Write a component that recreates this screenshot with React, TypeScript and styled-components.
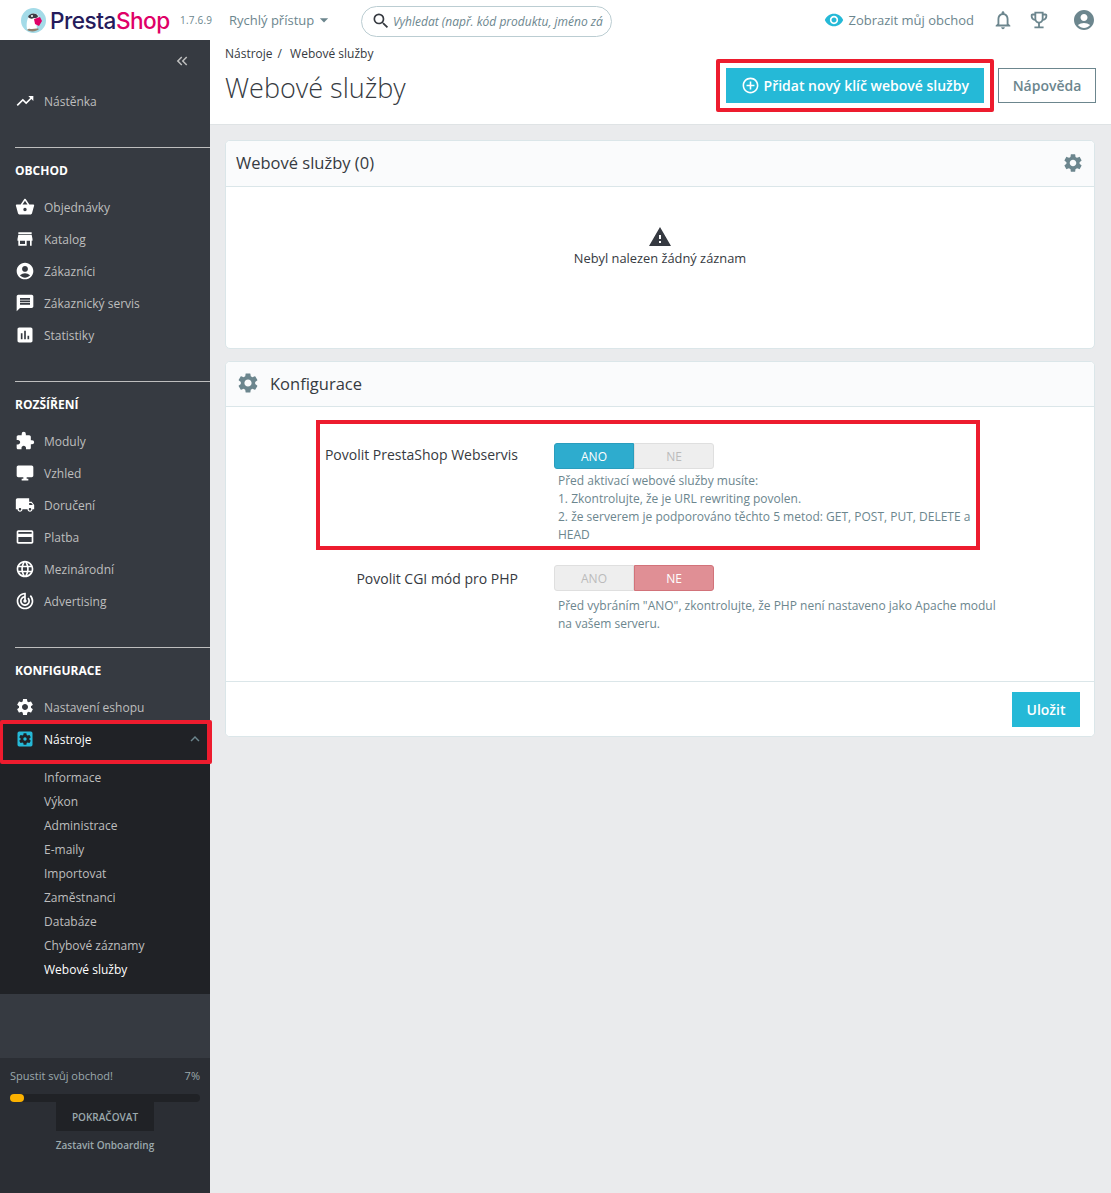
import React from 'react';
import styled, { createGlobalStyle } from 'styled-components';
import {
  MdAccountCircle,
  MdAddCircleOutline,
  MdAssessment,
  MdArrowDropDown,
  MdCreditCard,
  MdDesktopWindows,
  MdExtension,
  MdKeyboardArrowUp,
  MdKeyboardDoubleArrowLeft,
  MdLanguage,
  MdLocalShipping,
  MdMessage,
  MdNotificationsNone,
  MdOutlineEmojiEvents,
  MdSearch,
  MdSettings,
  MdSettingsApplications,
  MdShoppingBasket,
  MdStore,
  MdTrackChanges,
  MdTrendingUp,
  MdVisibility,
  MdWarning,
} from 'react-icons/md';

const GlobalStyle = createGlobalStyle`
  html, body { margin: 0; padding: 0; background: #eaebed; }
  * { box-sizing: border-box; }
  body { font-family: "Open Sans", "Liberation Sans", sans-serif; color: #363a41; }
`;

const Page = styled.div`
  width: 1111px;
  height: 1193px;
  display: flex;
  flex-direction: column;
  overflow: hidden;
`;

const TopBar = styled.header`
  height: 40px;
  flex: none;
  background: #fff;
  display: flex;
  align-items: center;
  padding-left: 21px;
`;

const LogoMark = styled.svg`
  width: 25px;
  height: 25px;
  flex: none;
`;

const LogoText = styled.div`
  margin-left: 4px;
  width: 121px;
  font-family: Inter, "Noto Sans", sans-serif;
  font-size: 22.6px;
  font-weight: 500;
  letter-spacing: -0.5px;
  color: #251b5b;
  span { color: #df0067; }
`;

const Version = styled.span`
  margin-left: 9px;
  width: 38px;
  font-size: 10px;
  color: #6c868e;
  letter-spacing: 0.2px;
`;

const QuickAccess = styled.div`
  margin-left: 11px;
  width: 132px;
  display: flex;
  align-items: center;
  font-size: 13px;
  color: #6c868e;
`;

const SearchBox = styled.div`
  width: 251px;
  height: 31px;
  margin-top: 2px;
  border: 1px solid #bbcdd2;
  border-radius: 16px;
  display: flex;
  align-items: center;
  padding: 0 8px 0 9px;
  color: #363a41;
`;

const SearchInput = styled.input`
  flex: 1;
  min-width: 0;
  margin-left: 2px;
  border: 0;
  outline: 0;
  padding: 0;
  background: transparent;
  font: italic 12px "Open Sans", sans-serif;
  &::placeholder { color: #6c868e; opacity: 1; }
`;

const TopRight = styled.div`
  margin-left: auto;
  display: flex;
  align-items: center;
  padding-right: 15px;
`;

const ShopLink = styled.div`
  display: flex;
  align-items: center;
  gap: 4px;
  font-size: 13px;
  color: #6c868e;
  margin-right: 18px;
  svg { color: #25b9d7; }
`;

const TopIcon = styled.span<{ $gap?: number }>`
  display: flex;
  color: #6c868e;
  margin-left: ${(p) => p.$gap ?? 0}px;
`;

const Body = styled.div`
  flex: 1;
  min-height: 0;
  display: flex;
`;

const Sidebar = styled.nav`
  width: 210px;
  flex: none;
  background: #363a41;
  display: flex;
  flex-direction: column;
`;

const Collapse = styled.div`
  height: 44px;
  display: flex;
  justify-content: flex-end;
  align-items: center;
  padding: 0 19px 2px 0;
  color: #bebebe;
`;

const MenuItem = styled.div`
  height: 32px;
  display: flex;
  align-items: center;
  padding-left: 15px;
  font-size: 12px;
  color: #bebebe;
  svg { flex: none; color: #fff; margin-right: 9px; }
`;

const Divider = styled.div`
  height: 1px;
  margin-left: 15px;
  background: #bebebe;
`;

const SectionTitle = styled.div`
  height: 43px;
  padding: 12px 0 0 15px;
  font-size: 12px;
  line-height: 21px;
  font-weight: 700;
  color: #fff;
`;

const Section = styled.section<{ $top: number }>`
  margin-top: ${(p) => p.$top}px;
`;

const ActiveItem = styled.div`
  position: relative;
  height: 36px;
  display: flex;
  align-items: center;
  padding: 0 0 4px 15px;
  background: #202226;
  font-size: 12px;
  color: #fff;
  svg.lead { color: #25b9d7; margin-right: 9px; flex: none; }
  svg.caret { margin-left: auto; margin-right: 6px; color: #6c868e; }
  &::after {
    content: '';
    position: absolute;
    left: 0;
    right: -2px;
    top: -3px;
    bottom: -5px;
    border: 4px solid #ed1c2e;
    border-left-width: 3px;
    border-right-width: 5px;
    border-radius: 2px;
  }
`;

const SubMenu = styled.div`
  background: #202226;
  padding: 7px 0 12px 44px;
`;

const SubItem = styled.div<{ $current?: boolean }>`
  height: 24px;
  line-height: 24px;
  font-size: 12px;
  color: ${(p) => (p.$current ? '#fff' : '#bebebe')};
`;

const Onboarding = styled.div`
  margin-top: auto;
  height: 135px;
  background: #2b2e34;
  padding: 9px 10px 0;
  display: flex;
  flex-direction: column;
  align-items: center;
`;

const OnboardingHead = styled.div`
  align-self: stretch;
  display: flex;
  justify-content: space-between;
  font-size: 11px;
  line-height: 18px;
  color: #9ba9ad;
`;

const Track = styled.div`
  align-self: stretch;
  height: 8px;
  margin-top: 9px;
  border-radius: 4px;
  background: #202226;
`;

const Fill = styled.div`
  height: 100%;
  border-radius: 4px;
  background: #fbb100;
`;

const ContinueButton = styled.div`
  width: 98px;
  height: 29px;
  background: #202226;
  color: #9ba9ad;
  font-size: 10px;
  font-weight: 600;
  display: flex;
  align-items: center;
  justify-content: center;
`;

const StopLink = styled.div`
  margin-top: 6px;
  font-size: 10px;
  line-height: 16px;
  font-weight: 600;
  color: #9ba9ad;
`;

const Main = styled.main`
  flex: 1;
  min-width: 0;
  display: flex;
  flex-direction: column;
`;

const PageHead = styled.div`
  height: 85px;
  flex: none;
  background: #fff;
  border-bottom: 1px solid #dfe3e5;
  display: flex;
  justify-content: space-between;
  padding: 6px 15px 0 15px;
`;

const Crumbs = styled.div`
  font-size: 12px;
  line-height: 16px;
  color: #363a41;
  span { margin: 0 5px; }
`;

const Title = styled.h1`
  margin: 7px 0 0;
  font-size: 27px;
  line-height: 38px;
  font-weight: 300;
  color: #363a41;
`;

const Actions = styled.div`
  display: flex;
  align-items: flex-start;
  padding-top: 13px;
`;

const Highlight = styled.div`
  border: 4px solid #ed1c2e;
  padding: 5px 6px;
  border-radius: 2px;
  margin-right: 4px;
`;

const PrimaryButton = styled.div`
  height: 35px;
  background: #25b9d7;
  color: #fff;
  font-size: 14px;
  font-weight: 600;
  display: flex;
  align-items: center;
  padding: 0 15px;
  gap: 4px;
`;

const OutlineButton = styled.div`
  margin-top: 9px;
  width: 98px;
  height: 35px;
  border: 1px solid #6c868e;
  color: #6c868e;
  font-size: 14px;
  font-weight: 600;
  display: flex;
  align-items: center;
  justify-content: center;
`;

const Panels = styled.div`
  padding-top: 15px;
  margin-left: 15px;
  display: flex;
  flex-direction: column;
  gap: 12px;
`;

const Panel = styled.section`
  background: #fff;
  border: 1px solid #dbe6e9;
  border-radius: 5px;
  width: 870px;
  overflow: hidden;
`;

const PanelHead = styled.div<{ $height: number }>`
  height: ${(p) => p.$height}px;
  background: #fafbfc;
  border-bottom: 1px solid #dbe6e9;
  display: flex;
  align-items: center;
  padding: 0 10px 2px 10px;
  font-size: 16.5px;
  font-weight: 500;
  color: #363a41;
  svg { color: #6c868e; }
`;

const PanelHeadText = styled.span`
  flex: 1;
`;

const ConfigHeadText = styled.span`
  margin-left: 10px;
`;

const Empty = styled.div`
  height: 161px;
  display: flex;
  flex-direction: column;
  align-items: center;
  padding-top: 38px;
  font-size: 12.85px;
  line-height: 18px;
  color: #363a41;
`;

const FormBody = styled.div`
  height: 274px;
  padding-top: 13px;
  padding-left: 90px;
`;

const FormRow = styled.div<{ $marked?: boolean }>`
  display: flex;
  width: ${(p) => (p.$marked ? 664 : 700)}px;
  border: 4px solid ${(p) => (p.$marked ? '#ed1c2e' : 'transparent')};
  padding-top: ${(p) => (p.$marked ? 19 : 11)}px;
  padding-bottom: ${(p) => (p.$marked ? 2 : 0)}px;
`;

const Label = styled.div<{ $top?: number }>`
  width: 198px;
  flex: none;
  padding-top: ${(p) => p.$top ?? 0}px;
  text-align: right;
  font-size: 14px;
  line-height: 24px;
  color: #363a41;
`;

const Field = styled.div`
  margin-left: 36px;
  flex: 1;
  min-width: 0;
`;

const Switch = styled.div`
  display: flex;
  width: 160px;
  height: 26px;
`;

const SwitchPart = styled.div<{ $on?: boolean; $tone?: 'yes' | 'no'; $side: 'left' | 'right' }>`
  width: 80px;
  display: flex;
  align-items: center;
  justify-content: center;
  font-size: 12px;
  border: 1px solid #dfdfdf;
  border-radius: ${(p) => (p.$side === 'left' ? '3px 0 0 3px' : '0 3px 3px 0')};
  background: #eee;
  color: #bbb;
  ${(p) => p.$on && p.$tone === 'yes' && 'background: #2eacce; border-color: #2a9dbd; color: #fff;'}
  ${(p) => p.$on && p.$tone === 'no' && 'background: #e08f95; border-color: #d2737a; color: #fff;'}
`;

const Help = styled.p<{ $top: number }>`
  margin: ${(p) => p.$top}px 0 0;
  padding-left: 4px;
  font-size: 12px;
  line-height: 18px;
  color: #6c868e;
`;

const PanelFoot = styled.div`
  height: 55px;
  border-top: 1px solid #dbe6e9;
  background: #fff;
  display: flex;
  justify-content: flex-end;
  align-items: flex-start;
  padding: 10px 14px 0 0;
`;

const SaveButton = styled.div`
  width: 68px;
  height: 35px;
  background: #25b9d7;
  color: #fff;
  font-size: 14px;
  font-weight: 600;
  display: flex;
  align-items: center;
  justify-content: center;
`;

const shopItems = [
  { label: 'Objednávky', icon: MdShoppingBasket },
  { label: 'Katalog', icon: MdStore },
  { label: 'Zákazníci', icon: MdAccountCircle },
  { label: 'Zákaznický servis', icon: MdMessage },
  { label: 'Statistiky', icon: MdAssessment },
];

const extensionItems = [
  { label: 'Moduly', icon: MdExtension },
  { label: 'Vzhled', icon: MdDesktopWindows },
  { label: 'Doručení', icon: MdLocalShipping },
  { label: 'Platba', icon: MdCreditCard },
  { label: 'Mezinárodní', icon: MdLanguage },
  { label: 'Advertising', icon: MdTrackChanges },
];

const toolItems = ['Informace', 'Výkon', 'Administrace', 'E-maily', 'Importovat', 'Zaměstnanci', 'Databáze', 'Chybové záznamy', 'Webové služby'];

function Logo() {
  return (
    <LogoMark viewBox="0 0 25 25">
      <circle cx="12.5" cy="12.5" r="12.5" fill="#a4dbe8" />
      <path d="M6 21c-1-5 0-11 3-14 2-2 6-2 8 0l1 4-3 2 1 8c-3 2-7 2-10 0z" fill="#fff" />
      <path d="M7 9c1-4 8-5 10-1 0 2-2 2-4 2-2 1-4 1-6-1z" fill="#3d3d46" />
      <path d="M13 11l6-2 2 4-3 5-4-2z" fill="#df0067" />
      <path d="M6 22c2-2 3-1 5-1s5-1 7 0c-3 3-9 3-12 1z" fill="#8d7f6c" />
      <circle cx="11" cy="8" r="1" fill="#fff" />
    </LogoMark>
  );
}

function App() {
  return (
    <Page>
      <GlobalStyle />
      <TopBar>
        <Logo />
        <LogoText>
          Presta<span>Shop</span>
        </LogoText>
        <Version>1.7.6.9</Version>
        <QuickAccess>
          Rychlý přístup
          <MdArrowDropDown size={20} />
        </QuickAccess>
        <SearchBox>
          <MdSearch size={20} />
          <SearchInput placeholder="Vyhledat (např. kód produktu, jméno zákazníka...)" />
        </SearchBox>
        <TopRight>
          <ShopLink>
            <MdVisibility size={20} />
            Zobrazit můj obchod
          </ShopLink>
          <TopIcon>
            <MdNotificationsNone size={22} />
          </TopIcon>
          <TopIcon $gap={14}>
            <MdOutlineEmojiEvents size={22} />
          </TopIcon>
          <TopIcon $gap={22}>
            <MdAccountCircle size={24} />
          </TopIcon>
        </TopRight>
      </TopBar>
      <Body>
        <Sidebar>
          <Collapse>
            <MdKeyboardDoubleArrowLeft size={18} />
          </Collapse>
          <Section $top={1}>
            <MenuItem>
              <MdTrendingUp size={20} />
              Nástěnka
            </MenuItem>
          </Section>
          <Section $top={30}>
            <Divider />
            <SectionTitle>OBCHOD</SectionTitle>
            {shopItems.map((item) => (
              <MenuItem key={item.label}>
                <item.icon size={20} />
                {item.label}
              </MenuItem>
            ))}
          </Section>
          <Section $top={30}>
            <Divider />
            <SectionTitle>ROZŠÍŘENÍ</SectionTitle>
            {extensionItems.map((item) => (
              <MenuItem key={item.label}>
                <item.icon size={20} />
                {item.label}
              </MenuItem>
            ))}
          </Section>
          <Section $top={30}>
            <Divider />
            <SectionTitle>KONFIGURACE</SectionTitle>
            <MenuItem>
              <MdSettings size={20} />
              Nastavení eshopu
            </MenuItem>
            <ActiveItem>
              <MdSettingsApplications className="lead" size={20} />
              Nástroje
              <MdKeyboardArrowUp className="caret" size={18} />
            </ActiveItem>
            <SubMenu>
              {toolItems.map((label) => (
                <SubItem key={label} $current={label === 'Webové služby'}>
                  {label}
                </SubItem>
              ))}
            </SubMenu>
          </Section>
          <Onboarding>
            <OnboardingHead>
              <span>Spustit svůj obchod!</span>
              <span>7%</span>
            </OnboardingHead>
            <Track>
              <Fill style={{ width: '7.4%' }} />
            </Track>
            <ContinueButton>POKRAČOVAT</ContinueButton>
            <StopLink>Zastavit Onboarding</StopLink>
          </Onboarding>
        </Sidebar>
        <Main>
          <PageHead>
            <div>
              <Crumbs>
                Nástroje<span>/</span> Webové služby
              </Crumbs>
              <Title>Webové služby</Title>
            </div>
            <Actions>
              <Highlight>
                <PrimaryButton>
                  <MdAddCircleOutline size={19} />
                  Přidat nový klíč webové služby
                </PrimaryButton>
              </Highlight>
              <OutlineButton>Nápověda</OutlineButton>
            </Actions>
          </PageHead>
          <Panels>
            <Panel>
              <PanelHead $height={46}>
                <PanelHeadText>Webové služby (0)</PanelHeadText>
                <MdSettings size={22} />
              </PanelHead>
              <Empty>
                <MdWarning size={24} color="#363a41" />
                Nebyl nalezen žádný záznam
              </Empty>
            </Panel>
            <Panel>
              <PanelHead $height={45}>
                <MdSettings size={24} />
                <ConfigHeadText>Konfigurace</ConfigHeadText>
              </PanelHead>
              <FormBody>
                <FormRow $marked>
                  <Label>Povolit PrestaShop Webservis</Label>
                  <Field>
                    <Switch>
                      <SwitchPart $side="left" $on $tone="yes">ANO</SwitchPart>
                      <SwitchPart $side="right">NE</SwitchPart>
                    </Switch>
                    <Help $top={3}>
                      Před aktivací webové služby musíte:
                      <br />
                      1. Zkontrolujte, že je URL rewriting povolen.
                      <br />
                      2. že serverem je podporováno těchto 5 metod: GET, POST, PUT, DELETE a HEAD
                    </Help>
                  </Field>
                </FormRow>
                <FormRow>
                  <Label $top={2}>Povolit CGI mód pro PHP</Label>
                  <Field>
                    <Switch>
                      <SwitchPart $side="left">ANO</SwitchPart>
                      <SwitchPart $side="right" $on $tone="no">NE</SwitchPart>
                    </Switch>
                    <Help $top={6}>Před vybráním "ANO", zkontrolujte, že PHP není nastaveno jako Apache modul na vašem serveru.</Help>
                  </Field>
                </FormRow>
              </FormBody>
              <PanelFoot>
                <SaveButton>Uložit</SaveButton>
              </PanelFoot>
            </Panel>
          </Panels>
        </Main>
      </Body>
    </Page>
  );
}

export default App;
